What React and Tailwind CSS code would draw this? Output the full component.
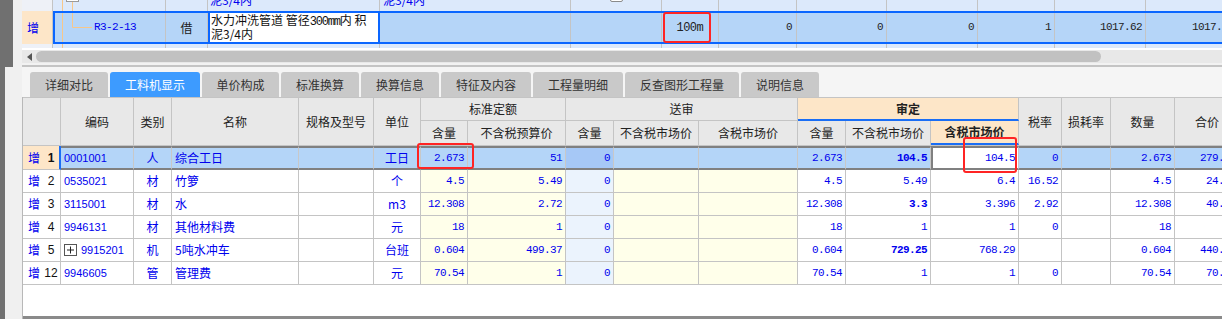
import React from "react";

const NUM = "font-['Liberation_Mono',monospace] text-[11px] tracking-[-0.6px]";
const LOWER_COLS =
  "grid grid-cols-[38px_73px_38px_127px_75px_47px_47px_98px_48px_85px_99px_48px_85px_88px_43px_49px_64px_65px]";
const UPPER_COLS =
  "grid grid-cols-[31px_113px_42px_172px_191px_91px_57px_78px_90px_91px_77px_91px_92px]";
const SEL_COLS =
  "grid grid-cols-[111px_42px_172px_191px_91px_57px_78px_90px_91px_77px_91px_92px]";

const tabs = [
  ["详细对比", "w-[78px]"],
  ["工料机显示", "w-[90px]", true],
  ["单价构成", "w-[77px]"],
  ["标准换算", "w-[78px]"],
  ["换算信息", "w-[78px]"],
  ["特征及内容", "w-[90px]"],
  ["工程量明细", "w-[90px]"],
  ["反查图形工程量", "w-[114px]"],
  ["说明信息", "w-[78px]"],
];

const rows = [
  { n: "1", code: "0001001", type: "人", name: "综合工日", unit: "工日", q: "2.673", p: "51", a: "2.673", b: "104.5", bb: true, c: "104.5", tax: "0", qty: "2.673", sum: "279.33" },
  { n: "2", code: "0535021", type: "材", name: "竹箩", unit: "个", q: "4.5", p: "5.49", a: "4.5", b: "5.49", c: "6.4", tax: "16.52", qty: "4.5", sum: "24.71" },
  { n: "3", code: "3115001", type: "材", name: "水", unit: "m3", q: "12.308", p: "2.72", a: "12.308", b: "3.3", bb: true, c: "3.396", tax: "2.92", qty: "12.308", sum: "40.62" },
  { n: "4", code: "9946131", type: "材", name: "其他材料费", unit: "元", q: "18", p: "1", a: "18", b: "1", c: "1", tax: "0", qty: "18", sum: "18" },
  { n: "5", code: "9915201", plus: true, type: "机", name: "5吨水冲车", unit: "台班", q: "0.604", p: "499.37", a: "0.604", b: "729.25", bb: true, c: "768.29", tax: "", qty: "0.604", sum: "440.47" },
  { n: "12", code: "9946605", type: "管", name: "管理费", unit: "元", q: "70.54", p: "1", a: "70.54", b: "1", c: "1", tax: "0", qty: "70.54", sum: "70.54" },
];

function H({ children, cls = "", bg = "bg-[#e8e8e8]" }) {
  return (
    <div
      className={`flex items-center justify-center border-r border-r-[#c4c4c4] text-[12px] text-[#222] ${bg} ${cls}`}
    >
      {children}
    </div>
  );
}

function Row({ r, sel }) {
  const line = sel
    ? "border-r border-r-[#c8c8c8] border-t-2 border-b-2 border-t-[#808080] border-b-[#808080]"
    : "border-r border-b border-r-[#c4c4c4] border-b-[#c4c4c4]";
  const rowBg = sel ? "bg-[#b4d5f8]" : "bg-white";
  const yellow = sel ? "bg-[#b4d5f8]" : "bg-[#ffffea]";
  const num = (v, bg, extra = "") => (
    <div className={`flex items-center justify-end pr-[3px] text-[#0000ee] ${NUM} ${line} ${bg} ${extra}`}>
      {v}
    </div>
  );

  return (
    <div className={`${LOWER_COLS} ${sel ? "h-[24px]" : "h-[23px]"}`}>
      <div
        className={`flex items-center pl-[5px] ${
          sel
            ? "bg-[#fde6c8] border-b border-b-[#c4c4c4] border-r-2 border-r-[#1a6ef5]"
            : "bg-white border-b border-r border-b-[#c4c4c4] border-r-[#c4c4c4]"
        }`}
      >
        <span className="text-[#0000ee]">增</span>
        <span
          className={`w-[16px] ml-[3px] text-center font-['Liberation_Sans',sans-serif] text-[12px] text-[#111] ${
            sel ? "font-bold" : ""
          }`}
        >
          {r.n}
        </span>
      </div>
      <div className={`flex items-center gap-[4px] pl-[3px] text-[#0000ee] font-['Liberation_Sans',sans-serif] text-[11px] ${line} ${rowBg}`}>
        {r.plus && (
          <svg width="13" height="12" viewBox="0 0 13 12">
            <rect x="0.5" y="0.5" width="12" height="11" fill="white" stroke="#555" />
            <path d="M3 6h7M6.5 2.5v7" stroke="#222" strokeWidth="1" />
          </svg>
        )}
        <span>{r.code}</span>
      </div>
      <div className={`flex items-center justify-center text-[#0000ee] ${line} ${rowBg}`}>{r.type}</div>
      <div className={`flex items-center pl-[3px] text-[#0000ee] ${line} ${rowBg}`}>{r.name}</div>
      <div className={`${line} ${rowBg}`} />
      <div className={`flex items-center justify-center text-[#0000ee] ${line} ${rowBg}`}>{r.unit}</div>
      {num(r.q, yellow)}
      {num(r.p, yellow)}
      {num("0", sel ? "bg-[#a6c8f6]" : "bg-[#ebf3fd]")}
      <div className={`${line} ${yellow}`} />
      <div className={`${line} ${yellow}`} />
      {num(r.a, rowBg)}
      {num(r.b, rowBg, r.bb ? "font-bold" : "")}
      {num(r.c, sel ? "bg-white" : rowBg, sel ? "border-l-2 border-l-[#808080]" : "")}
      {num(r.tax, rowBg)}
      <div className={`${line} ${rowBg}`} />
      {num(r.qty, rowBg)}
      {num(r.sum, rowBg)}
    </div>
  );
}

function UpperCell({ children, cls = "" }) {
  return <div className={`overflow-hidden border-r border-r-[#c4c4c4] ${cls}`}>{children}</div>;
}

export default function App() {
  return (
    <div className="relative w-[1222px] h-[319px] overflow-hidden bg-[#f0f0f0] font-['Noto_Sans_CJK_SC',sans-serif] text-[12px] leading-none">
      {/* upper grid + scrollbar */}
      <div className="flex h-[67px]">
        <div className="w-[13px] bg-[#707070]" />
        <div className="w-[9px] bg-[#f0f0f0]" />
        <div className="flex-1 flex flex-col min-w-0">
          {/* row above (cut) */}
          <div className={`${UPPER_COLS} h-[11px] bg-[#dce9fb]`}>
            <UpperCell cls="bg-[#eef1f7]" />
            <UpperCell>
              <svg width="40" height="11" viewBox="0 0 40 11">
                <path d="M9.5 0v11M19.5 2v9" stroke="#f7c78a" />
                <rect x="13.5" y="-10.5" width="12" height="12" fill="#fff" stroke="#9a9a9a" />
              </svg>
            </UpperCell>
            <UpperCell />
            <UpperCell cls="flex items-end pl-[2px]">
              <span className="mb-[4px] leading-[14px] text-[#0000ee]">泥3/4内</span>
            </UpperCell>
            <UpperCell cls="flex items-end pl-[3px]">
              <span className="mb-[4px] leading-[14px] text-[#0000ee]">泥3/4内</span>
            </UpperCell>
            <UpperCell cls="flex items-end justify-center">
              <div className="mb-[9px] w-[13px] h-[13px] shrink-0 rounded-[2px] border border-[#8a8a8a] bg-white" />
            </UpperCell>
            <UpperCell />
            <UpperCell />
            <UpperCell />
            <UpperCell />
            <UpperCell />
            <UpperCell />
            <UpperCell />
          </div>

          {/* selected row */}
          <div className="flex h-[33px]">
            <div className="w-[31px] shrink-0 flex items-center pl-[5px] bg-[#fde6c8] text-[#0000ee] border-r border-r-[#c4c4c4]">
              增
            </div>
            <div className="flex-1 border-2 border-r-0 border-[#0a66ff] bg-[#b5d5f8]">
              <div className={`${SEL_COLS} h-full text-[#222]`}>
                <UpperCell cls="flex items-center">
                  <svg width="38" height="29" viewBox="0 0 38 29" className="shrink-0">
                    <path d="M7.5 0v29M17.5 0v14.5H37" stroke="#f7c78a" fill="none" />
                  </svg>
                  <span className={`ml-[1px] text-[#0000ee] ${NUM}`}>R3-2-13</span>
                </UpperCell>
                <UpperCell cls="flex items-center justify-center">借</UpperCell>
                <div className="overflow-hidden bg-white border-l-2 border-r-2 border-[#0a66ff] pl-[1px] leading-[14px] whitespace-nowrap text-[#111]">
                  水力冲洗管道 管径
                  <span className="font-['Liberation_Mono',monospace] text-[12px] leading-[10px] tracking-[-1.2px]">300mm</span>
                  内 积
                  <br />
                  泥3/4内
                </div>
                <UpperCell />
                <UpperCell />
                <UpperCell cls={`flex items-center justify-end pr-[15px] ${NUM} text-[12px]`}>100m</UpperCell>
                <UpperCell cls={`flex items-center justify-end pr-[4px] ${NUM}`}>0</UpperCell>
                <UpperCell cls={`flex items-center justify-end pr-[3px] ${NUM}`}>0</UpperCell>
                <UpperCell cls={`flex items-center justify-end pr-[3px] ${NUM}`}>0</UpperCell>
                <UpperCell cls={`flex items-center justify-end pr-[3px] ${NUM}`}>1</UpperCell>
                <UpperCell cls={`flex items-center justify-end pr-[3px] ${NUM}`}>1017.62</UpperCell>
                <UpperCell cls={`flex items-center justify-end pr-[3px] ${NUM}`}>1017.62</UpperCell>
              </div>
            </div>
          </div>

          {/* row below (cut) */}
          <div className={`${UPPER_COLS} h-[4px] bg-[#dce9fb]`}>
            <UpperCell cls="bg-[#eef1f7]" />
            <UpperCell>
              <svg width="20" height="4" viewBox="0 0 20 4">
                <path d="M9.5 0v4" stroke="#f7c78a" />
              </svg>
            </UpperCell>
            <UpperCell />
            <UpperCell />
            <UpperCell />
            <UpperCell />
            <UpperCell />
            <UpperCell />
            <UpperCell />
            <UpperCell />
            <UpperCell />
            <UpperCell />
            <UpperCell />
          </div>

          {/* horizontal scrollbar */}
          <div className="h-[2px] bg-white" />
          <div className="h-[13px] flex items-center bg-[#e8e8e8]">
            <svg width="5" height="8" viewBox="0 0 5 8" className="ml-[5px]">
              <path d="M5 0v8L0 4z" fill="#555" />
            </svg>
            <div className="ml-[4px] w-[1065px] h-[11px] shrink-0 rounded-full bg-[#c1c1c1]" />
          </div>
          <div className="h-[2px] bg-[#f2f2f2]" />
          <div className="h-[2px] bg-[#c4c4c4]" />
        </div>
      </div>

      {/* lower panel */}
      <div className="flex h-[252px]">
        <div className="w-[5px] bg-[#707070]" />
        <div className="w-[17px] bg-[#f0f0f0]" />
        <div className="flex-1 flex flex-col min-w-0">
          <div className="h-[30px] flex items-end gap-[2px] pl-[8px] bg-[#f5f5f5]">
            {tabs.map(([t, w, active]) => (
              <div
                key={t}
                className={`${w} h-[25px] shrink-0 rounded-t-[3px] flex items-center justify-center text-[12px] ${
                  active ? "bg-[#3d9bff] text-white" : "bg-[#c9c9c9] text-[#333]"
                }`}
              >
                {t}
              </div>
            ))}
          </div>

          <div className="flex-1 flex flex-col border-l border-l-[#b8b8b8] bg-white">
            {/* header */}
            <div className={`${LOWER_COLS} grid-rows-[23px_24px] border-t border-t-[#c4c4c4] border-b border-b-[#c4c4c4]`}>
              <H cls="row-span-2" />
              <H cls="row-span-2">编码</H>
              <H cls="row-span-2">类别</H>
              <H cls="row-span-2">名称</H>
              <H cls="row-span-2">规格及型号</H>
              <H cls="row-span-2">单位</H>
              <H cls="col-span-2 border-b border-b-[#c4c4c4]">标准定额</H>
              <H cls="col-span-3 border-b border-b-[#c4c4c4]">送审</H>
              <H cls="col-span-3 font-bold border-b-2 border-b-[#1a6ef5]" bg="bg-[#fde6c8]">
                审定
              </H>
              <H cls="row-span-2">税率</H>
              <H cls="row-span-2">损耗率</H>
              <H cls="row-span-2">数量</H>
              <H cls="row-span-2">合价</H>
              <H>含量</H>
              <H>不含税预算价</H>
              <H>含量</H>
              <H>不含税市场价</H>
              <H>含税市场价</H>
              <H>含量</H>
              <H>不含税市场价</H>
              <H cls="font-bold border-b-2 border-b-[#1a6ef5]" bg="bg-[#fde6c8]">
                含税市场价
              </H>
            </div>

            {rows.map((r, i) => (
              <Row key={r.n} r={r} sel={i === 0} />
            ))}

            <div className="flex-1" />
            <div className="h-[3px] bg-[#8a8a8a]" />
          </div>
        </div>
      </div>

      {/* red annotation boxes */}
      <div className="absolute left-[663px] top-[12px] w-[48px] h-[31px] rounded-[3px] border-2 border-[#ff2424]" />
      <div className="absolute left-[417px] top-[143px] w-[57px] h-[26px] rounded-[3px] border-2 border-[#ff2424]" />
      <div className="absolute left-[963px] top-[137px] w-[54px] h-[36px] rounded-[3px] border-2 border-[#ff2424]" />
    </div>
  );
}
